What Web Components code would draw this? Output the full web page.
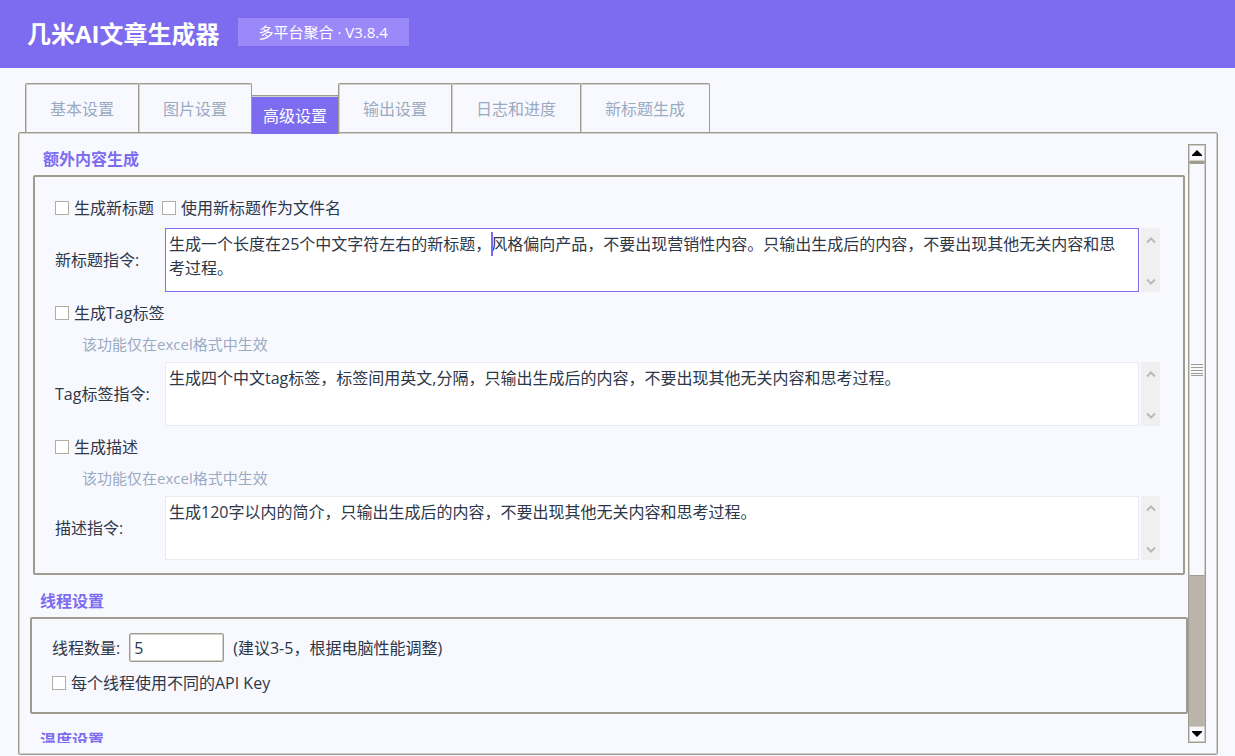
<!DOCTYPE html>
<html lang="zh-CN">
<head>
<meta charset="UTF-8">
<meta name="viewport" content="width=device-width, initial-scale=1.0">
<title>几米AI文章生成器</title>
<style>
    :root {
        --purple: #7d6bf0;
        --bg: #f8f9ff;
        --text: #2d3748;
        --muted: #9aaac0;
        --line: #9f9b8f;
        --line-light: #d3d0c9;
    }
    body {
        margin: 0;
        background: var(--bg);
        color: var(--text);
        font: 16px/24px "Open Sans", "Noto Sans CJK SC", sans-serif;
    }
</style>
</head>
<body>
<article-app></article-app>

<script>
class AppHeader extends HTMLElement{
    constructor(){
        super();
        this.attachShadow({mode : "open"});
        this.shadowRoot.innerHTML = `
                    <style>
                        :host {
                            display: flex;
                            align-items: center;
                            gap: 18px;
                            height: 68px;
                            flex: none;
                            box-sizing: border-box;
                            padding: 0 27px;
                            background: var(--purple);
                            color: #fff;
                        }
                        h1 {
                            margin: 0;
                            font-size: 24px;
                            line-height: 32px;
                            font-weight: 700;
                        }
                        span {
                            padding: 0 21px;
                            background: #9b89fa;
                            font-size: 15px;
                            line-height: 28px;
                            margin-bottom: 4px;
                        }
                    </style>
                    <h1><slot></slot></h1>
                    <span id="version"></span>
                `;
    }

    connectedCallback() {
        this.shadowRoot.getElementById('version').textContent = this.getAttribute('version');
    }
}

class TabButton extends HTMLElement{
    constructor(){
        super();
        this.attachShadow({mode : "open"});
        this.shadowRoot.innerHTML = `
                    <style>
                        :host {
                            display: block;
                            margin-left: -1px;
                        }
                        button {
                            display: block;
                            height: 49px;
                            margin: 0;
                            padding: 2px 24px 0;
                            border: 1px solid var(--line);
                            border-bottom: 0;
                            border-radius: 2px 2px 0 0;
                            box-shadow: inset 1px 1px var(--line-light);
                            background: var(--bg);
                            color: var(--muted);
                            font: inherit;
                        }
                        :host([active]) {
                            margin-bottom: -2px;
                        }
                        :host([active]) button {
                            height: 39px;
                            padding: 2px 11px 0;
                            border-radius: 0;
                            box-shadow: inset 0 1px var(--line-light);
                            background: var(--purple);
                            color: #fff;
                        }
                    </style>
                    <button type="button"><slot></slot></button>
                `;
    }
}

class TabBar extends HTMLElement{
    constructor(){
        super();
        this.attachShadow({mode : "open"});
        this.shadowRoot.innerHTML = `
                    <style>
                        :host {
                            display: flex;
                            flex: none;
                            align-items: flex-end;
                            position: relative;
                            z-index: 1;
                            padding: 15px 26px 0;
                        }
                    </style>
                    <slot></slot>
                `;
    }
}

class ScrollTrack extends HTMLElement{
    constructor(){
        super();
        this.attachShadow({mode : "open"});
        this.shadowRoot.innerHTML = `
                    <style>
                        :host {
                            display: flex;
                            flex-direction: column;
                            flex: none;
                            width: 18px;
                            box-sizing: border-box;
                            border: 1px solid var(--line);
                            background: #bab4aa;
                        }
                        button {
                            display: grid;
                            place-items: center;
                            flex: none;
                            height: 16px;
                            padding: 0;
                            border: 1px solid var(--line-light);
                            background: var(--bg);
                        }
                        .thumb {
                            display: grid;
                            place-items: center;
                            flex: 414;
                            border: 1px solid var(--line-light);
                            border-top: 3px solid var(--line);
                            border-bottom-color: var(--line);
                            background: var(--bg);
                        }
                        .rest {
                            flex: 151;
                        }
                        svg {
                            display: block;
                        }
                    </style>
                    <button type="button" aria-label="向上">
                        <svg width="10" height="6" viewBox="0 0 10 6"><path d="M5 0L10 5V6H0V5Z" fill="#000"/></svg>
                    </button>
                    <div class="thumb">
                        <svg width="14" height="12" viewBox="0 0 14 12" stroke="#9f9b8f"><path d="M1 .5H13M1 3.5H13M1 6.5H13M1 9.5H13M1 11.5H13"/></svg>
                    </div>
                    <div class="rest"></div>
                    <button type="button" aria-label="向下">
                        <svg width="10" height="6" viewBox="0 0 10 6"><path d="M0 0H10V1L5 6L0 1Z" fill="#000"/></svg>
                    </button>
                `;
    }
}

class SettingsGroup extends HTMLElement{
    constructor(){
        super();
        this.attachShadow({mode : "open"});
        this.shadowRoot.innerHTML = `
                    <style>
                        :host {
                            display: block;
                        }
                        h2 {
                            margin: 0 10px 4px;
                            color: var(--purple);
                            font-size: 16px;
                            line-height: 24px;
                            font-weight: 700;
                        }
                        .frame {
                            border: 2px solid var(--line);
                            border-radius: 2px;
                            padding: var(--frame-padding, 19px 23px 13px 20px);
                        }
                    </style>
                    <h2 id="titulo"></h2>
                    <div class="frame"><slot></slot></div>
                `;
    }

    connectedCallback() {
        this.shadowRoot.getElementById('titulo').textContent = this.getAttribute('heading');
    }
}

class CheckOption extends HTMLElement{
    constructor(){
        super();
        this.attachShadow({mode : "open"});
        this.shadowRoot.innerHTML = `
                    <style>
                        :host {
                            display: block;
                        }
                        label {
                            display: flex;
                            align-items: center;
                            gap: 5px;
                        }
                        input {
                            appearance: none;
                            width: 14px;
                            height: 14px;
                            margin: 0;
                            border: 1px solid #b3aea3;
                            background: #fff;
                        }
                        input:checked {
                            background: var(--purple);
                        }
                    </style>
                    <label><input type="checkbox"><slot></slot></label>
                `;
    }
}

class HintText extends HTMLElement{
    constructor(){
        super();
        this.attachShadow({mode : "open"});
        this.shadowRoot.innerHTML = `
                    <style>
                        :host {
                            display: block;
                            margin: 7px 0 6px 27px;
                            color: var(--muted);
                            font-size: 15px;
                        }
                    </style>
                    <slot></slot>
                `;
    }
}

class PromptField extends HTMLElement{
    constructor(){
        super();
        this.attachShadow({mode : "open"});
        this.shadowRoot.innerHTML = `
                    <style>
                        :host {
                            display: grid;
                            grid-template-columns: 110px 1fr 19px;
                            align-items: center;
                        }
                        .box {
                            position: relative;
                            margin-right: 2px;
                        }
                        textarea {
                            display: block;
                            width: 100%;
                            height: 64px;
                            box-sizing: border-box;
                            padding: 3px 16px 3px 3px;
                            border: 1px solid #e9ebf3;
                            border-radius: 0;
                            outline: none;
                            resize: none;
                            overflow: hidden;
                            background: #fff;
                            color: inherit;
                            font: inherit;
                        }
                        .caret {
                            display: none;
                            position: absolute;
                            top: 4px;
                            left: 326px;
                            width: 2px;
                            height: 24px;
                            background: var(--purple);
                        }
                        :host([active]) textarea {
                            border-color: var(--purple);
                        }
                        :host([active]) .caret {
                            display: block;
                        }
                        .bar {
                            display: flex;
                            flex-direction: column;
                            align-items: center;
                            justify-content: space-between;
                            height: 64px;
                            box-sizing: border-box;
                            padding: 8px 0 6px;
                            background: #f0f0f0;
                        }
                    </style>
                    <label for="texto" id="etiqueta"></label>
                    <div class="box">
                        <textarea id="texto" spellcheck="false"></textarea>
                        <i class="caret"></i>
                    </div>
                    <div class="bar">
                        <svg width="10" height="8" viewBox="0 0 10 8" fill="none" stroke="#b9b9b9" stroke-width="2"><path d="M1 6.5L5 2.5L9 6.5"/></svg>
                        <svg width="10" height="8" viewBox="0 0 10 8" fill="none" stroke="#b9b9b9" stroke-width="2"><path d="M1 1.5L5 5.5L9 1.5"/></svg>
                    </div>
                `;
    }

    connectedCallback() {
        this.shadowRoot.getElementById('etiqueta').textContent = this.getAttribute('label');
        this.shadowRoot.getElementById('texto').value = this.getAttribute('value');
    }
}

class NumberField extends HTMLElement{
    constructor(){
        super();
        this.attachShadow({mode : "open"});
        this.shadowRoot.innerHTML = `
                    <style>
                        :host {
                            display: flex;
                            align-items: center;
                            gap: 9px;
                        }
                        input {
                            width: 95px;
                            height: 29px;
                            box-sizing: border-box;
                            padding: 0 4px;
                            border: 1px solid var(--line);
                            border-radius: 2px;
                            box-shadow: inset 0 0 0 1px var(--line-light);
                            background: #fff;
                            color: inherit;
                            font: inherit;
                        }
                    </style>
                    <label for="numero" id="etiqueta"></label>
                    <input id="numero" type="text">
                    <span><slot></slot></span>
                `;
    }

    connectedCallback() {
        this.shadowRoot.getElementById('etiqueta').textContent = this.getAttribute('label');
        this.shadowRoot.getElementById('numero').value = this.getAttribute('value');
    }
}

class ArticleApp extends HTMLElement{
    constructor(){
        super();
        this.attachShadow({mode : "open"});
        this.shadowRoot.innerHTML = `
                    <style>
                        :host {
                            display: flex;
                            flex-direction: column;
                            height: 100vh;
                        }
                        main {
                            display: flex;
                            flex: 1;
                            min-height: 0;
                            margin: 0 17px 1px 18px;
                            padding: 11px;
                            border: 1px solid var(--line);
                            border-radius: 2px;
                            box-shadow: inset 0 0 0 1px var(--line-light);
                        }
                        .view {
                            display: flex;
                            flex-direction: column;
                            gap: 14px;
                            flex: 1;
                            min-width: 0;
                            overflow: hidden;
                        }
                        settings-group {
                            flex: none;
                        }
                        .extra {
                            margin: 3px 3px 0;
                        }
                        .threads {
                            --frame-padding: 14px 20px 17px;
                        }
                        .checks {
                            display: flex;
                            gap: 8px;
                            margin-bottom: 8px;
                        }
                        prompt-field + check-option, number-field + check-option {
                            margin-top: 9px;
                        }
                    </style>
                    <app-header version="多平台聚合 · V3.8.4">几米AI文章生成器</app-header>
                    <tab-bar>
                        <tab-button>基本设置</tab-button>
                        <tab-button>图片设置</tab-button>
                        <tab-button active>高级设置</tab-button>
                        <tab-button>输出设置</tab-button>
                        <tab-button>日志和进度</tab-button>
                        <tab-button>新标题生成</tab-button>
                    </tab-bar>
                    <main>
                        <div class="view">
                            <settings-group class="extra" heading="额外内容生成">
                                <div class="checks">
                                    <check-option>生成新标题</check-option>
                                    <check-option>使用新标题作为文件名</check-option>
                                </div>
                                <prompt-field active label="新标题指令:" value="生成一个长度在25个中文字符左右的新标题，风格偏向产品，不要出现营销性内容。只输出生成后的内容，不要出现其他无关内容和思考过程。"></prompt-field>
                                <check-option>生成Tag标签</check-option>
                                <hint-text>该功能仅在excel格式中生效</hint-text>
                                <prompt-field label="Tag标签指令:" value="生成四个中文tag标签，标签间用英文,分隔，只输出生成后的内容，不要出现其他无关内容和思考过程。"></prompt-field>
                                <check-option>生成描述</check-option>
                                <hint-text>该功能仅在excel格式中生效</hint-text>
                                <prompt-field label="描述指令:" value="生成120字以内的简介，只输出生成后的内容，不要出现其他无关内容和思考过程。"></prompt-field>
                            </settings-group>
                            <settings-group class="threads" heading="线程设置">
                                <number-field label="线程数量:" value="5">(建议3-5，根据电脑性能调整)</number-field>
                                <check-option>每个线程使用不同的API Key</check-option>
                            </settings-group>
                            <settings-group heading="温度设置"></settings-group>
                        </div>
                        <scroll-track></scroll-track>
                    </main>
                `;
    }
}

customElements.define('app-header', AppHeader)
customElements.define('tab-button', TabButton)
customElements.define('tab-bar', TabBar)
customElements.define('scroll-track', ScrollTrack)
customElements.define('settings-group', SettingsGroup)
customElements.define('check-option', CheckOption)
customElements.define('hint-text', HintText)
customElements.define('prompt-field', PromptField)
customElements.define('number-field', NumberField)
customElements.define('article-app', ArticleApp)
</script>
</body>
</html>
